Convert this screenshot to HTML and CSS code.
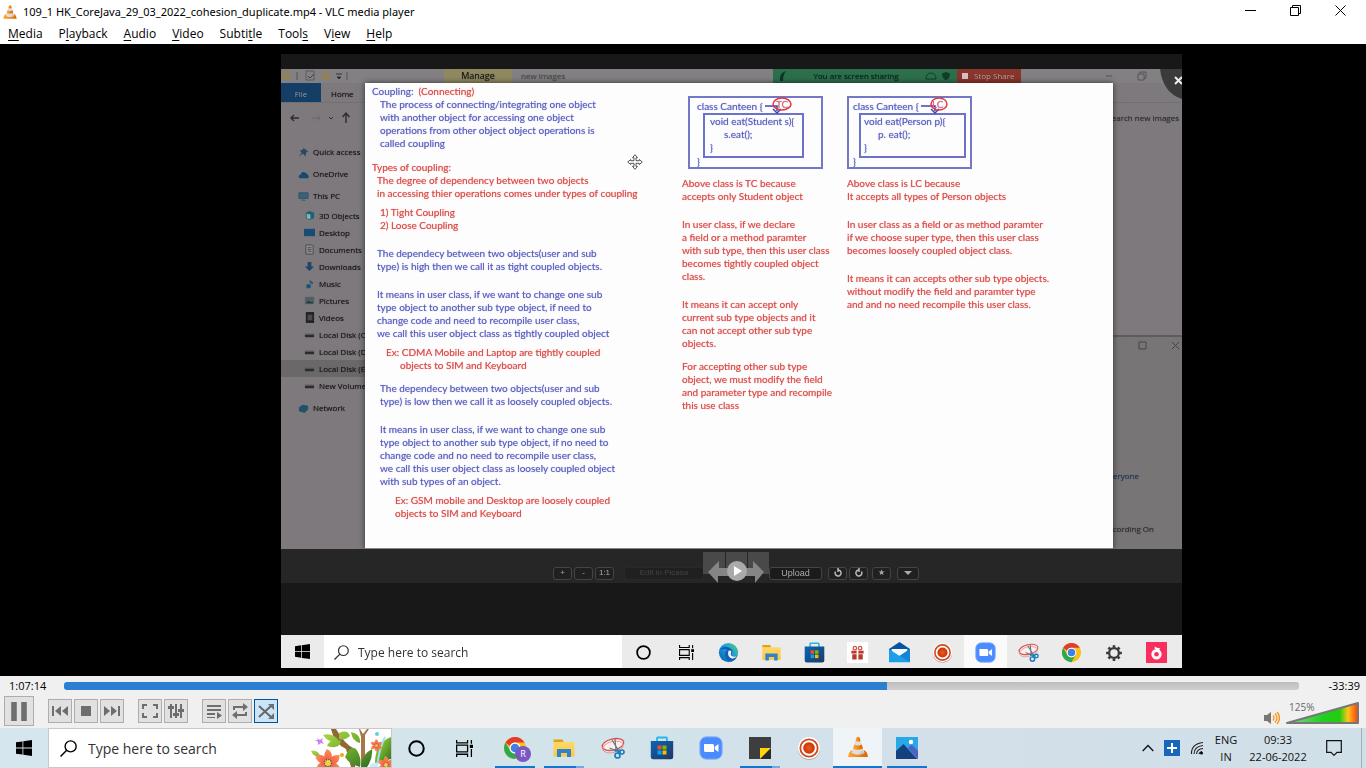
FILE: index.html
```html
<!DOCTYPE html>
<html lang="en">
<head>
<meta charset="utf-8">
<title>109_1 HK_CoreJava_29_03_2022_cohesion_duplicate.mp4 - VLC media player</title>
<link rel="stylesheet" href="styles.css">
</head>
<body>
<svg class="sprite" aria-hidden="true">
  <defs>
    <linearGradient id="g-cone" x1="0" x2="1" y1="0" y2="0"><stop offset="0" stop-color="#ffa63a"/><stop offset=".5" stop-color="#f58a10"/><stop offset="1" stop-color="#d86400"/></linearGradient>
    <linearGradient id="g-store" x1="0" x2="1" y1="0" y2="1"><stop offset="0" stop-color="#0b66b8"/><stop offset="1" stop-color="#20375f"/></linearGradient>
    <linearGradient id="g-fold" x1="0" x2="0" y1="0" y2="1"><stop offset="0" stop-color="#ffd968"/><stop offset="1" stop-color="#fdc741"/></linearGradient>
    <radialGradient id="g-rec"><stop offset="0" stop-color="#f05a18"/><stop offset="1" stop-color="#c53408"/></radialGradient>
    <linearGradient id="g-vol" x1="0" x2="1" y1="0" y2="0"><stop offset="0" stop-color="#8fd48f"/><stop offset=".5" stop-color="#1fd01f"/><stop offset=".74" stop-color="#22cc10"/><stop offset=".86" stop-color="#ffc61a"/><stop offset="1" stop-color="#ff3b10"/></linearGradient>
    <linearGradient id="g-edge" x1="0" x2="1" y1="1" y2="0"><stop offset="0" stop-color="#0c59a4"/><stop offset=".55" stop-color="#1b9de2"/><stop offset="1" stop-color="#5bd36a"/></linearGradient>
    <linearGradient id="g-petal" x1="0" x2="0" y1="0" y2="1"><stop offset="0" stop-color="#ff9255"/><stop offset="1" stop-color="#ef5148"/></linearGradient>
    <linearGradient id="g-leaf" x1="0" x2="1" y1="0" y2="1"><stop offset="0" stop-color="#b6d94a"/><stop offset=".5" stop-color="#6fae2a"/><stop offset="1" stop-color="#2f6d25"/></linearGradient>
  </defs>
  <symbol id="i-cone" viewBox="0 0 24 24">
    <path d="M3 18l2-2.500h14l2 2.500 1 4H2z" fill="url(#g-cone)"/>
    <path d="M10.500 2.500Q12 1 13.500 2.500L18.500 18Q12 21.500 5.500 18z" fill="#dedede"/>
    <path d="M10.500 2.500Q12 1 13.500 2.500L14.500 6Q12 7.200 9.500 6z" fill="url(#g-cone)"/>
    <path d="M8.300 9.500Q12 11.500 15.700 9.500L17 13.500Q12 16 7 13.500z" fill="url(#g-cone)"/>
    <path d="M16 15l2.500 3Q15 20 12 20z" fill="#bdbdbd" opacity=".6"/>
  </symbol>
  <symbol id="i-win" viewBox="0 0 16 16"><path d="M0 2.300l6.500-.9v6.200H0zM7.300 1.300L16 0v7.600H7.300zM0 8.400h6.500v6.200L0 13.700zM7.300 8.400H16V16l-8.700-1.200z"/></symbol>
  <symbol id="i-search" viewBox="0 0 16 16"><circle cx="10" cy="6" r="5.200" fill="none" stroke="currentColor" stroke-width="1.300"/><path d="M6.300 9.700L.5 15.500" stroke="currentColor" stroke-width="1.400"/></symbol>
  <symbol id="i-ring" viewBox="0 0 16 16"><circle cx="8" cy="8" r="6.800" fill="none" stroke="currentColor" stroke-width="1.900"/></symbol>
  <symbol id="i-task" viewBox="0 0 16 16"><path d="M.6 0v2.600h10.300V0M.6 16v-2.600h10.300V16M.6 4.900h10.300v6.200H.6zM14.500 0v3.500M14.500 8.500V16" fill="none" stroke="currentColor" stroke-width="1.200"/><path d="M13 4.500h3v3h-3z" fill="currentColor"/></symbol>
  <symbol id="i-chrome" viewBox="0 0 24 24"><circle cx="12" cy="12" r="11" fill="#fbc116"/><path d="M2.500 6.500A11 11 0 0 1 21.500 6.500H12A5.500 5.500 0 0 0 7 10z" fill="#e33b2e"/><path d="M2.500 6.500A11 11 0 0 0 12 23l4.800-8.200A5.500 5.500 0 0 1 7.200 14.800z" fill="#2da94f"/><circle cx="12" cy="12" r="5.500" fill="#fff"/><circle cx="12" cy="12" r="4.300" fill="#3f7fe8"/></symbol>
  <symbol id="i-folder" viewBox="0 0 24 24"><path d="M1.500 3.500h9l1.500 3H1.500z" fill="#e0a117"/><path d="M1.500 6h21v14.500h-21z" fill="url(#g-fold)"/><path d="M5 13h14v8h-4v-4H9v4H5z" fill="#2e83cc"/></symbol>
  <symbol id="i-snip" viewBox="0 0 24 24"><ellipse cx="12" cy="8.500" rx="11" ry="5.500" fill="#fbeeee" stroke="#d95352" stroke-width="1.300" transform="rotate(-14 12 8.500)"/><ellipse cx="12" cy="11" rx="10.500" ry="5.500" fill="none" stroke="#e58d8b" stroke-width=".8" transform="rotate(-14 12 11)"/><path d="M11 4l7.500 12M8.500 12l7.500 3M14 3l1 11" fill="none" stroke="#69757d" stroke-width="1.200"/><circle cx="16.500" cy="19.500" r="2.500" fill="none" stroke="#197ebe" stroke-width="1.700"/><circle cx="21" cy="16" r="2" fill="none" stroke="#197ebe" stroke-width="1.600"/><path d="M13.500 15l4.500-.5-1 3.500" fill="none" stroke="#197ebe" stroke-width="1.600"/></symbol>
  <symbol id="i-store" viewBox="0 0 24 24"><path d="M7 6V2.200q0-.7.8-.7h8.400q.8 0 .8.700V6" fill="none" stroke="#27b6ea" stroke-width="1.800"/><path d="M.8 5h22.400v16q0 2.300-2.300 2.300H3.100Q.8 23.300.8 21z" fill="url(#g-store)"/><path d="M7.500 9.500h4v4h-4z" fill="#f25022"/><path d="M12.500 9.500h4v4h-4z" fill="#7fba00"/><path d="M7.500 14.500h4v4h-4z" fill="#00a4ef"/><path d="M12.500 14.500h4v4h-4z" fill="#ffb900"/></symbol>
  <symbol id="i-zoom" viewBox="0 0 24 24"><rect x=".8" y=".8" width="22.400" height="22.400" rx="6.500" fill="#4a8cff" stroke="#8db6f7"/><path d="M5 8h8.500q1.500 0 1.500 1.500V16H6.500Q5 16 5 14.500zM15.800 10.800L19.500 8v8l-3.700-2.500z" fill="#fff"/></symbol>
  <symbol id="i-note" viewBox="0 0 24 24"><path d="M1 1h22v11L12 23H1z" fill="#3e3e3e"/><path d="M12 12h11L12 23z" fill="#ffd60a"/><path d="M23 12v11H12z" fill="#2b2b2b"/></symbol>
  <symbol id="i-rec" viewBox="0 0 24 24"><circle cx="12" cy="12.800" r="11" fill="#9b9b9b"/><circle cx="12" cy="12" r="11" fill="#fff"/><circle cx="12" cy="12" r="8.700" fill="none" stroke="#d4471a" stroke-width="1.800"/><circle cx="12" cy="12" r="5.800" fill="url(#g-rec)"/></symbol>
  <symbol id="i-photo" viewBox="0 0 24 24"><path d="M1 1h22v22H1z" fill="#2aa7e6"/><path d="M23 11v12H12z" fill="#6c83da"/><path d="M13 12l3.500-3.500L23 15v8z" fill="#4b63c0"/><path d="M1 15l7.500-7L22 23H1z" fill="#15407f"/><circle cx="16" cy="6" r="2.200" fill="#fff"/></symbol>
  <symbol id="i-edge" viewBox="0 0 24 24"><circle cx="12" cy="12" r="11" fill="url(#g-edge)"/><path d="M1.500 9Q6 3.500 13 6.500q5 2.500 3 6.500-1.500 2.500 2 3.500 3 .5 4.500-2-2 6-7.500 8Q7 20 8 13q.5-3 3-4.500Q5 7 1.500 9z" fill="#0f5fb5"/><path d="M12 10q4-1 3 2.500-1.500 3 2.500 4.200 2.800.4 4.700-1.500Q19 20 15 18.500 10 16 12 10z" fill="#eef6fb"/></symbol>
  <symbol id="i-gift" viewBox="0 0 24 24"><path d="M0 0h24v24H0z" fill="#fff"/><path d="M5 10h6v3H5zM13 10h6v3h-6zM6 14h5v6H6zM13 14h5v6h-5z" fill="#ba3827"/><circle cx="9" cy="7" r="2" fill="none" stroke="#cf5946" stroke-width="1.500"/><circle cx="15" cy="7" r="2" fill="none" stroke="#cf5946" stroke-width="1.500"/></symbol>
  <symbol id="i-mail" viewBox="0 0 24 24"><path d="M0 8L12 0l12 8v3H0z" fill="#0b52a0"/><path d="M3 8h18v9H3z" fill="#f6fafc"/><path d="M0 8l12 8 12-8v15H0z" fill="#1d9fe8"/><path d="M24 8v15L9 14l3 2z" fill="#1484d6"/></symbol>
  <symbol id="i-gear" viewBox="0 0 24 24"><circle cx="12" cy="12" r="6.500" fill="none" stroke="#3b3b3b" stroke-width="3"/><path d="M12 1.500V5M12 19v3.500M1.500 12H5M19 12h3.500M4.600 4.600L7 7M17 17l2.400 2.400M4.600 19.400L7 17M17 7l2.400-2.400" stroke="#3b3b3b" stroke-width="3.500"/></symbol>
  <symbol id="i-pink" viewBox="0 0 24 24"><path d="M0 0h24v24H0z" fill="#fb2f5e"/><circle cx="12" cy="14" r="4.300" fill="none" stroke="#fff" stroke-width="3.200"/><path d="M10 8V5q2 2 6 2l-1 3z" fill="#fff"/></symbol>
  <symbol id="i-disk" viewBox="0 0 12 12"><path d="M1 6h10v3H1z" fill="#2c2c2e"/><path d="M1 5h10v1H1z" fill="#5a5a5c"/></symbol>
  <symbol id="flower" viewBox="-12 -12 24 24"><g fill="url(#g-petal)"><path d="M0 0Q-6-5-1-12 7-8 0 0z"/><path d="M0 0Q-6-5-1-12 7-8 0 0z" transform="rotate(60)"/><path d="M0 0Q-6-5-1-12 7-8 0 0z" transform="rotate(120)"/><path d="M0 0Q-6-5-1-12 7-8 0 0z" transform="rotate(180)"/><path d="M0 0Q-6-5-1-12 7-8 0 0z" transform="rotate(240)"/><path d="M0 0Q-6-5-1-12 7-8 0 0z" transform="rotate(300)"/></g><circle r="3" fill="#f7d13b" stroke="#38515c" stroke-width="1" stroke-dasharray="1 1"/></symbol>
</svg>

<header class="titlebar">
  <svg class="title-icon"><use href="#i-cone"/></svg>
  <h1 class="title-text">109_1 HK_CoreJava_29_03_2022_cohesion_duplicate.mp4 - VLC media player</h1>
  <button class="win-btn" aria-label="Minimize"><svg viewBox="0 0 11 11"><path d="M0 5.500h11" stroke="#000"/></svg></button>
  <button class="win-btn" aria-label="Restore"><svg viewBox="0 0 11 11"><path d="M.5 2.500h8v8h-8zM2.500 2.500v-2h8v8h-2" fill="none" stroke="#000"/></svg></button>
  <button class="win-btn" aria-label="Close"><svg viewBox="0 0 11 11"><path d="M.5.5l10 10M10.500.5l-10 10" stroke="#000"/></svg></button>
</header>
<nav class="menubar" aria-label="Player menu">
  <button><u>M</u>edia</button><button>P<u>l</u>ayback</button><button><u>A</u>udio</button><button><u>V</u>ideo</button><button>Subti<u>t</u>le</button><button>Tool<u>s</u></button><button>V<u>i</u>ew</button><button><u>H</u>elp</button>
</nav>

<main class="stage">
  <div class="video">
    <div class="desktop">
      <section class="explorer">
        <div class="ex-title">
          <svg class="ex-quick" viewBox="0 0 72 14"><path d="M0 2h9v9H0z" fill="#8d815f"/><path d="M16 3v8M66 3v8" stroke="#555"/><path d="M25 2h8v9h-8z" fill="none" stroke="#5e5b5e"/><path d="M27 7l2 2 4-4" fill="none" stroke="#444"/><path d="M41 2h8v9h-8z" fill="#8d815f"/><path d="M55 5h6M56 8h4l-2 2z" stroke="#333" fill="#333"/></svg>
          <span class="ex-manage">Manage</span>
          <span class="ex-name">new images</span>
          <span class="share-on"><svg viewBox="0 0 8 10"><path d="M1 10V7q0-5 6-7Q4 4 4 10z" fill="#0b3a22"/></svg><span class="share-label">You are screen sharing</span><svg class="share-r" viewBox="0 0 26 10"><path d="M1 8q0-6 5-6t5 6z" fill="none" stroke="#123d29"/><path d="M21 1l4 1.500q0 5-4 7-4-2-4-7z" fill="#123d29"/></svg></span>
          <span class="share-stop"><i class="stop-dot"></i>Stop Share</span>
          <svg class="ex-win" viewBox="0 0 46 12"><path d="M0 6h6M32 4h6v6h-6zM34 4V2h6v6h-2" fill="none" stroke="#555"/></svg>
        </div>
        <div class="ex-ribbon"><span class="ex-file">File</span><span class="ex-home">Home</span></div>
        <div class="ex-addr">
          <svg class="ex-arrows" viewBox="0 0 66 14"><path d="M9 7H1M4 4L1 7l3 3M56 12V2M52.500 6L56 2l3.500 4" fill="none" stroke="#2d2d2d" stroke-width="1.400"/><path d="M22 7h8M27 4l3 3-3 3" fill="none" stroke="#6b686b"/><path d="M39 6l2 2 2-2" fill="none" stroke="#333"/></svg>
          <span class="ex-search">Search new images</span>
        </div>
        <ul class="tree">
          <li class="top"><svg viewBox="0 0 12 12"><path d="M6 1l5 4-2 1-1 4-3-3-4 4 3-5-2-2 3-1z" fill="#264a62"/></svg>Quick access</li>
          <li class="top"><svg viewBox="0 0 12 12"><path d="M2 10q-3-3 1-4 1-4 5-2 2 0 2 2 3 1 1 4z" fill="#174a72"/></svg>OneDrive</li>
          <li class="top"><svg viewBox="0 0 12 12"><path d="M1 2h10v6H1zM4 10h4" fill="#34647c" stroke="#36505f"/></svg>This PC</li>
          <li><svg viewBox="0 0 12 12"><path d="M2 3l4-2 5 2v6l-5 2-4-2z" fill="#1d6370"/><path d="M3 4l4 1v5L3 9z" fill="#8fb0b5"/></svg>3D Objects</li>
          <li><svg viewBox="0 0 12 12"><path d="M0 2h12v8H0z" fill="#154d75"/></svg>Desktop</li>
          <li><svg viewBox="0 0 12 12"><path d="M2 1h7l1 1v9H2zM4 4h4M4 6h4M4 8h4" fill="#8e8b8e" stroke="#4a4a4c"/></svg>Documents</li>
          <li><svg viewBox="0 0 12 12"><path d="M4 1h4v5h3l-5 5-5-5h3z" fill="#1f4663"/></svg>Downloads</li>
          <li><svg viewBox="0 0 12 12"><path d="M6 1q1 3 4 4l-1 2-2-2v4" fill="#17547c"/><circle cx="5" cy="9" r="2.500" fill="#17547c"/></svg>Music</li>
          <li><svg viewBox="0 0 12 12"><path d="M1 2h10v8H1z" fill="#526064"/><path d="M2 9l3-3 2 2 2-1 1 2z" fill="#223a40"/></svg>Pictures</li>
          <li><svg viewBox="0 0 12 12"><path d="M2 0h9v12H2z" fill="#242426"/><path d="M4 3h5v6H4z" fill="#4b4b4d"/></svg>Videos</li>
          <li><svg><use href="#i-disk"/></svg>Local Disk (C:)</li>
          <li><svg><use href="#i-disk"/></svg>Local Disk (D:)</li>
          <li class="sel"><svg><use href="#i-disk"/></svg>Local Disk (E:)</li>
          <li><svg><use href="#i-disk"/></svg>New Volume (F:)</li>
          <li class="top net"><svg viewBox="0 0 12 12"><path d="M1 5l4-3 6 1v4l-4 4-6-2z" fill="#24506a"/></svg>Network</li>
        </ul>
      </section>
      <aside class="zoomwin">
        <svg viewBox="0 0 44 10"><path d="M1 1h7v7H1zM34 1l7 7M41 1l-7 7" fill="none" stroke="#444"/></svg>
        <span class="everyone">Everyone</span>
        <span class="recording">Recording On</span>
      </aside>
      <svg class="corner" viewBox="0 0 22 30"><path d="M0 0h22v30Q3 24 0 0z" fill="#3c3b3c"/><path d="M15 8l7 7M22 8l-7 7" stroke="#eee" stroke-width="2"/></svg>

      <article class="board">
        <div class="col col-a">
          <p><span>Coupling:&nbsp; </span><em>(Connecting)</em></p>
          <p class="in2">The process of connecting/integrating one object<br>with another object for accessing one object<br>operations from other object object operations is<br>called coupling</p>
          <p class="red g3">Types of coupling:</p>
          <p class="red in1">The degree of dependency between two objects<br>in accessing thier operations comes under types of coupling</p>
          <p class="red in2 g1">1) Tight Coupling<br>2) Loose Coupling</p>
          <p class="in1 g4">The dependecy between two objects(user and sub<br>type) is high then we call it as tight coupled objects.</p>
          <p class="in1 g4">It means in user class, if we want to change one sub<br>type object to another sub type object, if need to<br>change code and need to recompile user class,<br>we call this user object class as tightly coupled object</p>
          <p class="red in3 g1">Ex: CDMA Mobile and Laptop are tightly coupled<br><span class="hang">objects to SIM and Keyboard</span></p>
          <p class="in2 g2">The dependecy between two objects(user and sub<br>type) is low then we call it as loosely coupled objects.</p>
          <p class="in2 g4">It means in user class, if we want to change one sub<br>type object to another sub type object, if no need to<br>change code and no need to recompile user class,<br>we call this user object class as loosely coupled object<br>with sub types of an object.</p>
          <p class="red in4 g1">Ex: GSM mobile and Desktop are loosely coupled<br>objects to SIM and Keyboard</p>
        </div>
        <div class="col col-b">
          <div class="code">
            <div>class Canteen {</div>
            <div class="method"><div>void eat(Student s){</div><div class="stmt">s.eat();</div><div>}</div></div>
            <div>}</div>
            <div class="mark"><svg viewBox="0 0 32 20"><path d="M1 9h12v5M9 12l4 4 4-4" fill="none" stroke="#3f45b8" stroke-width="1.500"/><ellipse cx="18" cy="7" rx="9" ry="6" fill="none" stroke="#e0393e" stroke-width="1.500"/></svg><b>TC</b></div>
          </div>
          <p class="red g3">Above class is TC because<br>accepts only Student object</p>
          <p class="red g4">In user class, if we declare<br>a field or a method paramter<br>with sub type, then this user class<br>becomes tightly coupled object<br>class.</p>
          <p class="red g4">It means it can accept only<br>current sub type objects and it<br>can not accept other sub type<br>objects.</p>
          <p class="red g2">For accepting other sub type<br>object, we must modify the field<br>and parameter type and recompile<br>this use class</p>
        </div>
        <div class="col col-c">
          <div class="code">
            <div>class Canteen {</div>
            <div class="method"><div>void eat(Person p){</div><div class="stmt">p. eat();</div><div>}</div></div>
            <div>}</div>
            <div class="mark"><svg viewBox="0 0 32 20"><path d="M1 9h14v5M11 12l4 4 4-4" fill="none" stroke="#3f45b8" stroke-width="1.500"/><ellipse cx="19" cy="7" rx="8" ry="6" fill="none" stroke="#e0393e" stroke-width="1.500"/></svg><b>LC</b></div>
          </div>
          <p class="red g3">Above class is LC because<br>It accepts all types of Person objects</p>
          <p class="red g4">In user class as a field or as method paramter<br>if we choose super type, then this user class<br>becomes loosely coupled object class.</p>
          <p class="red g4">It means it can accepts other sub type objects.<br>without modify the field and paramter type<br>and and no need recompile this user class.</p>
        </div>
        <svg class="pointer" viewBox="0 0 16 16"><path d="M8 .7l2.500 3H9v3h3.300V5.500l3 2.500-3 2.500V9.300H9v3h1.500l-2.500 3-2.500-3H7v-3H3.700v1.200L.7 8l3-2.500v1.200H7v-3H5.500z" fill="#fff" stroke="#444" stroke-width=".9"/></svg>
      </article>
    </div>
    <div class="picasa">
      <button class="pb">+</button><button class="pb">-</button><button class="pb">1:1</button>
      <button class="pb edit">Edit in Picasa</button>
      <svg class="pnav" viewBox="0 0 66 34"><path d="M0 3h22v22H0zM23 3h21v22H23zM45 3h21v22H45z" fill="#555" opacity=".75"/><path d="M5 23L16 12v7h34v-7l11 11-9 11v-7H15v7z" fill="#858585"/><circle cx="34" cy="22" r="10" fill="#aaa"/><path d="M31 17l8 5-8 5z" fill="#fff"/></svg>
      <button class="pb upload">Upload</button>
      <button class="pb" aria-label="Rotate left"><svg viewBox="0 0 10 10"><path d="M5 2a3 3 0 1 1-2.500 1.500M5 0v4" fill="none" stroke="#bbb" stroke-width="1.500"/></svg></button>
      <button class="pb" aria-label="Rotate right"><svg viewBox="0 0 10 10"><path d="M5 2a3 3 0 1 0 2.500 1.500M5 0v4" fill="none" stroke="#bbb" stroke-width="1.500"/></svg></button>
      <button class="pb star">★</button>
      <button class="pb down" aria-label="More"><svg viewBox="0 0 10 10"><path d="M1 3h8L5 7z" fill="#aaa"/></svg></button>
    </div>
    <div class="vtask">
      <button class="vstart" aria-label="Start"><svg><use href="#i-win"/></svg></button>
      <label class="vsearch"><svg><use href="#i-search"/></svg><input type="text" placeholder="Type here to search" aria-label="Search in recording"></label>
      <div class="vapps">
        <span><svg class="s15"><use href="#i-ring"/></svg></span><span><svg class="s15"><use href="#i-task"/></svg></span><span><svg><use href="#i-edge"/></svg></span><span><svg><use href="#i-folder"/></svg></span><span><svg><use href="#i-store"/></svg></span><span><svg><use href="#i-gift"/></svg></span><span><svg><use href="#i-mail"/></svg></span><span><svg><use href="#i-rec"/></svg></span><span class="on"><svg><use href="#i-zoom"/></svg></span><span><svg><use href="#i-snip"/></svg></span><span><svg><use href="#i-chrome"/></svg></span><span><svg class="s18"><use href="#i-gear"/></svg></span><span><svg><use href="#i-pink"/></svg></span>
      </div>
    </div>
  </div>
</main>

<section class="controls" aria-label="Playback controls">
  <div class="seek"><span class="elapsed">1:07:14</span><input class="bar" type="range" min="0" max="6053" value="4034" aria-label="Position"><span class="remain">-33:39</span></div>
  <div class="buttons">
    <button class="cb play" aria-label="Pause"><svg viewBox="0 0 18 18"><path d="M2 1h5v17H2zM11 1h5v17h-5z"/></svg></button>
    <div class="grp">
      <button class="cb" aria-label="Previous"><svg viewBox="0 0 18 18"><path d="M1 4h2v10H1zM10 4v10L4 9zM17 4v10l-6-5z"/></svg></button>
      <button class="cb" aria-label="Stop"><svg viewBox="0 0 18 18"><path d="M4 4h10v10H4z"/></svg></button>
      <button class="cb" aria-label="Next"><svg viewBox="0 0 18 18"><path d="M15 4h2v10h-2zM8 4v10l6-5zM1 4v10l6-5z"/></svg></button>
    </div>
    <div class="grp">
      <button class="cb" aria-label="Fullscreen"><svg viewBox="0 0 18 18"><path d="M1 2h5v2H3v3H1zM12 2h5v5h-2V4h-3zM1 11h2v3h3v2H1zM15 11h2v5h-5v-2h3z"/></svg></button>
      <button class="cb" aria-label="Extended settings"><svg viewBox="0 0 18 18"><path d="M3 2h2v14H3zM8 2h2v14H8zM13 2h2v14h-2zM1 4h6v3H1zM6 11h6v3H6zM11 7h6v3h-6z"/></svg></button>
    </div>
    <div class="grp">
      <button class="cb" aria-label="Playlist"><svg viewBox="0 0 18 18"><path d="M2 3h14v2H2zM2 7h14v2H2zM2 11h8v2H2zM2 15h8v1H2zM12 10l5 3.500-5 3.500z"/></svg></button>
      <button class="cb" aria-label="Loop"><svg viewBox="0 0 18 18"><path d="M2 8V4h10V1l5 4-5 4V6H4v2zM16 10v4H6v3l-5-4 5-4v3h8v-2z"/></svg></button>
      <button class="cb active" aria-label="Random"><svg viewBox="0 0 18 18"><path d="M2 4l12 11M2 15L14 4" fill="none" stroke="#666" stroke-width="2"/><path d="M11 2h6v6zM17 17h-6l6-6z"/></svg></button>
    </div>
    <div class="volume">
      <svg class="speaker" viewBox="0 0 16 14"><path d="M0 4h3l4-3v12l-4-3H0z" fill="#777"/><path d="M9 4.500q2 2.500 0 5M11 2.500q4 4.500 0 9M13 1q5 6 0 12" fill="none" stroke="#f59a23" stroke-width="1.400"/></svg>
      <div class="volbox"><span>125%</span><svg viewBox="0 0 74 24"><path d="M1 22L72 2v20z" fill="url(#g-vol)" stroke="#777" stroke-width="2" stroke-linejoin="round"/></svg></div>
    </div>
  </div>
</section>

<footer class="taskbar">
  <button class="start" aria-label="Start"><svg><use href="#i-win"/></svg></button>
  <div class="search">
    <svg class="glass"><use href="#i-search"/></svg>
    <input type="text" placeholder="Type here to search" aria-label="Search">
    <svg class="garden" viewBox="0 0 80 38">
      <path d="M20 0q3 14 15 20l5 18h4V20Q34 16 25 0z" fill="#8d6a33"/>
      <path d="M50 8v30h4V6l4-6h-2l-4 5-3-5h-1z" fill="#a87748"/>
      <g fill="url(#g-leaf)"><path d="M12 6q10-3 16 6-10 3-16-6zM16 17q4-9 14-5-2 9-14 5zM28 4q8-4 11 3-6 5-11 3zM40 3q10 2 9 11-8-2-9-11zM34 28q5-12 11-8 6 8 4 18-10-2-15-10zM50 38q0-12 11-18 1 10-5 18z"/><path d="M64 34q0-20 16-26v22z"/><path d="M0 22q6-2 10 6Q2 28 0 22zM18 34q6-7 10-4-2 6-10 4z"/></g>
      <path d="M74 8q-6 12-8 30" fill="none" stroke="#9be2f5" stroke-width="2"/>
      <path d="M6 9l3 2 3-2-1 3 2 3-3-1-3 2v-3l-3-2 3 0z" fill="#d27df0"/>
      <circle cx="66" cy="5" r="2" fill="#5fd2e8"/><circle cx="31" cy="26" r="2" fill="#f6a31b"/>
      <circle cx="63" cy="38" r="4" fill="#c9ecf8"/>
      <use href="#flower" x="3" y="20" width="28" height="28"/>
      <use href="#flower" x="59" y="10" width="13" height="13"/>
      <use href="#flower" x="66" y="27" width="18" height="18"/>
    </svg>
  </div>
  <button class="tb" aria-label="Cortana"><svg class="s16"><use href="#i-ring"/></svg></button>
  <button class="tb" aria-label="Task View"><svg class="s16"><use href="#i-task"/></svg></button>
  <div class="apps">
    <button class="run" aria-label="Chrome"><svg><use href="#i-chrome"/></svg><b class="badge">R</b></button>
    <button class="run multi" aria-label="File Explorer"><svg><use href="#i-folder"/></svg></button>
    <button aria-label="Snipping Tool"><svg><use href="#i-snip"/></svg></button>
    <button aria-label="Store"><svg><use href="#i-store"/></svg></button>
    <button aria-label="Zoom"><svg><use href="#i-zoom"/></svg></button>
    <button class="run multi" aria-label="Sticky Notes"><svg><use href="#i-note"/></svg></button>
    <button aria-label="Recorder"><svg><use href="#i-rec"/></svg></button>
    <button class="current" aria-label="VLC"><svg><use href="#i-cone"/></svg></button>
    <button class="run" aria-label="Photos"><svg><use href="#i-photo"/></svg></button>
  </div>
  <div class="tray">
    <button aria-label="Show hidden icons"><svg width="12" height="8" viewBox="0 0 12 8"><path d="M.7 7L6 1.500 11.300 7" fill="none" stroke="#111" stroke-width="1.300"/></svg></button>
    <svg class="plus" width="16" height="16" viewBox="0 0 16 16"><path d="M0 0h16v16H0z" fill="#1867bd"/><path d="M8 3v10M3 8h10" stroke="#fff" stroke-width="2"/></svg>
    <svg class="wifi" width="14" height="14" viewBox="0 0 14 14"><path d="M1.500 13Q1 3 13 1.500M4 13Q4 5.500 13 4.500M6.500 13Q7 8 13 7.500M9 13Q9.500 11 12 10.500" fill="none" stroke="#222" stroke-width="1.100"/><circle cx="11.500" cy="12" r="1.500"/></svg>
    <div class="lang">ENG<br>IN</div>
    <div class="clock">09:33<br>22-06-2022</div>
    <button class="notif" aria-label="Notifications"><svg width="16" height="16" viewBox="0 0 16 16"><path d="M.7.700h14.600v11.600H11L8 15.300l-3-3H.7z" fill="none" stroke="#111" stroke-width="1.200"/></svg></button>
  </div>
</footer>
</body>
</html>
```
FILE: styles.css
```css
* { box-sizing: border-box; }
body {
  margin: 0;
  min-height: 100vh;
  display: flex;
  flex-direction: column;
  background: #000;
  color: #000;
  font: 12px/16px "Open Sans", "Noto Sans", sans-serif;
}
button { border: 0; padding: 0; margin: 0; background: none; font: inherit; color: inherit; display: flex; align-items: center; justify-content: center; }
p, h1, ul { margin: 0; padding: 0; font: inherit; }
input { border: 0; padding: 0; min-width: 0; background: none; font: inherit; outline: 0; }
svg { display: block; flex: none; }
.sprite { position: absolute; width: 0; height: 0; }

/* Window chrome */
.titlebar { display: flex; align-items: center; height: 24px; background: #fff; padding: 0 3px 0 2px; }
.title-icon { width: 16px; height: 18px; margin-right: 5px; }
.title-text { flex: 1; white-space: nowrap; font: 11px/16px "Noto Sans", "Open Sans", sans-serif; }
.win-btn { width: 45px; height: 20px; align-self: flex-start; }
.win-btn svg { width: 11px; height: 11px; }
.menubar { display: flex; gap: 16px; height: 20px; background: #fff; padding-left: 8px; }
.menubar button { height: 20px; font-size: 12px; display: block; white-space: nowrap; }
.menubar u { text-underline-offset: 2px; }

/* Video area */
.stage { flex: 1; display: flex; background: #000; padding: 10px 184px 8px 281px; }
.video { flex: 1; min-width: 0; display: flex; flex-direction: column; background: #181818; padding-top: 15px; overflow: hidden; filter: blur(0.4px); }
.desktop { position: relative; flex: 1; background: #7d797c; overflow: hidden; font-size: 8px; line-height: 12px; color: #161416; text-shadow: 0 0 1px rgba(0, 0, 0, .5); }
.ex-title { display: flex; align-items: center; height: 14px; line-height: 14px; background: #838083; font-size: 9px; }
.ex-quick { width: 72px; height: 14px; }
.ex-manage { width: 68px; margin-left: 91px; background: #8f8861; text-align: center; }
.ex-name { margin-left: 9px; color: #555; white-space: nowrap; font-size: 8px; }
.share-on { display: flex; align-items: center; gap: 8px; width: 184px; margin-left: auto; padding: 0 6px; background: #2c6f4d; color: #0b2618; white-space: nowrap; font-size: 8px; }
.share-on svg { width: 8px; height: 10px; }
.share-on .share-r { width: 26px; }
.share-label { flex: 1; text-align: center; }
.share-stop { display: flex; align-items: center; gap: 6px; width: 64px; padding-left: 5px; background: #8a352b; color: #c4a9a6; white-space: nowrap; font-size: 8px; }
.stop-dot { width: 6px; height: 6px; background: #d5c2c0; flex: none; }
.ex-win { width: 46px; height: 12px; margin: 0 30px 0 85px; }
.ex-ribbon { display: flex; height: 20px; line-height: 22px; border-bottom: 1px solid #727072; }
.ex-file { width: 40px; background: #153e66; color: #93a5b5; text-align: center; }
.ex-home { padding-left: 10px; }
.ex-addr { display: flex; align-items: center; justify-content: space-between; height: 30px; padding: 0 3px 0 9px; }
.ex-arrows { width: 66px; height: 14px; }
.ex-search { color: #333; }
.tree { list-style: none; padding-top: 8px; }
.tree li { display: flex; align-items: center; gap: 4px; height: 17px; padding-left: 23px; white-space: nowrap; }
.tree li.top { height: 22px; padding-left: 17px; }
.tree li.net { margin-top: 3px; }
.tree svg { width: 11px; height: 11px; }
.tree .sel { width: 90px; background: #6b686a; }
.zoomwin { position: absolute; right: 0; bottom: 0; width: 90px; height: 214px; padding: 4px 0 14px; border-top: 2px solid #5e5b5d; background: #787577; display: flex; flex-direction: column; align-items: flex-end; white-space: nowrap; }
.zoomwin svg { width: 44px; height: 10px; }
.everyone { margin: 119px 43px 41px 0; color: #1e3b68; }
.recording { margin-right: 28px; color: #333; }
.corner { position: absolute; right: 0; top: 0; width: 22px; height: 30px; }

.board { position: absolute; left: 84px; right: 69px; top: 14px; bottom: 0; display: flex; background: #fdfdfe; box-shadow: 0 0 6px rgba(0, 0, 0, .6); padding-left: 7px; color: #5a5fc0; font: 10px/13px Lato, "Open Sans", sans-serif; white-space: nowrap; border-bottom: 1px solid #888; text-shadow: 0 0 1px rgba(90, 95, 192, .7); }
.red, .board em { color: #dc4c47; font-style: normal; text-shadow: 0 0 1px rgba(220, 76, 71, .7); }
.col-a { width: 310px; padding-top: 2px; }
.col-b { width: 165px; padding-top: 13px; }
.col-c { padding-top: 13px; }
.in1 { padding-left: 5px; }
.in2 { padding-left: 8px; }
.in3 { padding-left: 14px; }
.in4 { padding-left: 23px; }
.hang { padding-left: 14px; }
.g1 { margin-top: 6px; }
.g2 { margin-top: 10px; }
.g3 { margin-top: 11px; }
.g4 { margin-top: 15px; }
.code { position: relative; width: 135px; height: 73px; border: 2px solid #7377c8; padding: 2px 0 0 7px; line-height: 13px; margin-left: 6px; margin-bottom: -3px; }
.code + p { margin-top: 11px; }
.method { width: 101px; height: 45px; margin-left: 6px; border: 2px solid #6a72cc; padding-left: 5px; }
.code > div:nth-child(3) { margin-top: -3px; }
.stmt { padding-left: 14px; }
.col-c .code { width: 125px; margin-left: 0; padding-left: 4px; }
.col-c .method { width: 107px; padding-left: 3px; }
.mark { position: absolute; right: 25px; top: -1px; width: 32px; height: 20px; }
.mark svg { width: 32px; height: 20px; }
.mark b { position: absolute; left: 12px; top: 1px; color: #e66; font-weight: 400; }
.col-c .mark { right: 18px; }
.pointer { position: absolute; left: 262px; top: 71px; width: 16px; height: 16px; }

.picasa { display: flex; align-items: center; gap: 2px; height: 34px; padding: 0 0 0 272px; background: #262626; color: #aaa; font: 8px/10px "Liberation Sans", sans-serif; }
.picasa .pb { width: 19px; height: 13px; margin-top: 14px; border: 1px solid #444; border-radius: 3px; background: #202020; }
.pb svg { width: 10px; height: 10px; }
.picasa .edit { width: 80px; margin-left: 8px; border-color: #292929; color: #454342; }
.pnav { width: 66px; height: 34px; margin-left: -3px; }
.picasa .upload { width: 53px; margin-right: 4px; margin-left: -2px; background: #1b1b1b; font-size: 9px; }
.picasa .star { margin-left: 2px; }
.picasa .down { width: 22px; margin-left: 4px; }
.vtask { display: flex; height: 33px; margin-top: 52px; background: #ebebeb; }
.vstart { width: 43px; }
.vstart svg { width: 15px; height: 15px; }
.vsearch { flex: 1; display: flex; align-items: center; gap: 9px; padding: 2px 0 0 10px; background: #fff; color: #333; font-size: 12px; }
.vsearch svg { width: 15px; height: 15px; }
.vsearch input { flex: 1; }
input::placeholder { color: #333; opacity: 1; }
.vapps { display: grid; width: 560px; padding: 0 4px 0 0; grid-template-columns: repeat(13, 1fr); }
.vapps span { display: flex; align-items: center; justify-content: center; padding-top: 2px; }
.vapps svg { width: 21px; height: 21px; }
.vapps .s15 { width: 15px; height: 15px; }
.vapps .s18 { width: 18px; height: 18px; }
.vapps .on { background: #fafafa; }

/* Player controls */
.controls { background: #f0f0f0; height: 52px; padding: 2px 6px 2px 4px; display: flex; flex-direction: column; justify-content: space-between; }
.seek { display: flex; align-items: center; height: 16px; padding-left: 5px; font-size: 11px; }
.elapsed { width: 55px; }
.remain { width: 61px; text-align: right; }
.bar { flex: 1; height: 8px; margin: 0; appearance: none; border-radius: 3px; background: linear-gradient(90deg, #2a7fd3 66.650%, transparent 66.650%), linear-gradient(#bdbdbd, #cfcfcf); }
.bar::-webkit-slider-thumb { appearance: none; width: 1px; height: 8px; }
.buttons { display: flex; align-items: center; gap: 14px; height: 30px; }
.grp { display: flex; gap: 2px; }
.cb { width: 24px; height: 24px; border: 1px solid #adadad; background: #e1e1e1; }
.cb svg { width: 18px; height: 18px; fill: #6e6e6e; }
.cb.play { width: 30px; height: 30px; }
.cb.play svg { width: 20px; height: 20px; }
.cb.active { border-color: #005499; background: #cce4f7; }
.volume { margin-left: auto; display: flex; align-items: flex-end; gap: 6px; }
.speaker { width: 16px; height: 14px; margin-bottom: -3px; }
.volbox { position: relative; width: 74px; height: 24px; color: #666; font-size: 10px; line-height: 10px; margin-bottom: -3px; }
.volbox svg { width: 74px; height: 24px; }
.volbox span { position: absolute; left: 3px; top: 1px; }

/* System taskbar */
.taskbar { display: flex; height: 40px; background: linear-gradient(90deg, #d6e6ee, #d2e4ea 40%, #d3dfe9 70%, #d0e0e8); }
.start { width: 48px; }
.start svg { width: 16px; height: 16px; }
.search { display: flex; align-items: center; width: 344px; border: 1px solid #c8c8c8; background: #fff; padding-left: 11px; }
.glass { width: 17px; height: 17px; margin-right: 11px; }
.search input { flex: 1; font-size: 14px; line-height: 20px; height: 24px; }
.garden { width: 80px; height: 38px; }
.tb { width: 48px; }
.s16 { width: 17px; height: 17px; }
.tb + .apps { margin-left: 2px; }
.apps { display: flex; }
.apps button { position: relative; width: 49px; height: 40px; }
.apps svg { width: 24px; height: 24px; }
.apps .run { background: linear-gradient(#0a78d6, #0a78d6) center bottom / 40px 2px no-repeat; }
.apps .multi { background: linear-gradient(90deg, #0a78d6 32px, #6cabe5 32px) center bottom / 40px 2px no-repeat; }
.apps .current { background: #eef4f8; border-bottom: 2px solid #0a78d6; }
.badge { position: absolute; right: 8px; bottom: 6px; width: 16px; height: 16px; border-radius: 8px; background: #7b57c2; color: #fff; font-size: 9px; font-weight: 400; text-align: center; }
.tray { margin-left: auto; display: flex; align-items: center; gap: 7px; padding-right: 4px; font-size: 11px; line-height: 17px; text-align: center; color: #111; }
.plus { margin-left: 3px; }
.wifi { margin: 0 2px 0 3px; }
.lang { width: 26px; }
.clock { width: 62px; margin-left: 1px; }
.notif { width: 46px; height: 40px; padding-right: 10px; border-right: 1px solid #9fb0b8; }
```
